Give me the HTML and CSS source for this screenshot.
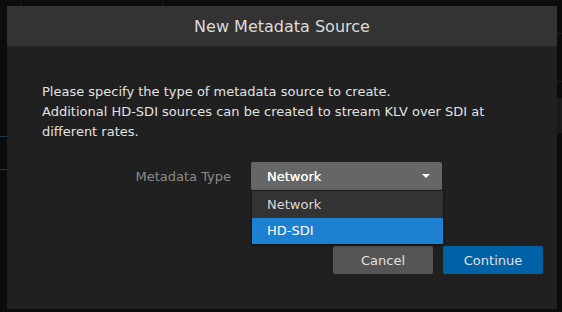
FILE: index.html
```html
<!DOCTYPE html>
<html lang="en">
<head>
  <meta charset="UTF-8" />
  <title>New Metadata Source</title>
  <link rel="stylesheet" href="styles.css">
</head>
<body>
  <div class="backdrop">
    <span class="line top-a"></span>
    <span class="line top-b"></span>
    <span class="line left-a"></span>
    <span class="line left-b"></span>
    <span class="line right-a"></span>
    <span class="line right-b"></span>
    <span class="line right-c"></span>
  </div>
  <div class="modal">
    <header class="modal-header">
      <h1>New Metadata Source</h1>
    </header>
    <div class="modal-body">
      <p class="intro">
        Please specify the type of metadata source to create.<br>
        Additional HD-SDI sources can be created to stream KLV over SDI at different rates.
      </p>
      <div class="form-row">
        <label class="field-label">Metadata Type</label>
        <div class="select-wrap">
          <div class="select">
            <span>Network</span>
            <span class="caret"></span>
          </div>
          <ul class="options">
            <li>Network</li>
            <li class="active">HD-SDI</li>
          </ul>
        </div>
      </div>
      <div class="actions">
        <button class="btn">Cancel</button>
        <button class="btn primary">Continue</button>
      </div>
    </div>
  </div>
</body>
</html>
```

FILE: styles.css
```css
body {
  margin: 0;
  height: 312px;
  overflow: hidden;
  background: #0c0c0c;
  font-family: "DejaVu Sans", Verdana, sans-serif;
  font-size: 13px;
  color: #e0e0e0;
  position: relative;
}
.backdrop .line {
  position: absolute;
  background: #1c1c1c;
}
.top-a { left: 20px; top: 0; width: 1px; height: 6px; }
.top-b { left: 162px; top: 0; width: 1px; height: 6px; }
.left-a, .left-b { left: 0; width: 7px; height: 1px; background: #1d3a52 !important; }
.left-a { top: 136px; }
.left-b { top: 169px; }
.right-a { left: 557px; top: 33px; width: 5px; height: 1px; }
.right-b { left: 557px; top: 81px; width: 5px; height: 1px; }
.right-c { left: 557px; top: 98px; width: 5px; height: 35px; background: #1a1a1a !important; }

.modal {
  position: relative;
  margin: 6px 0 0 7px;
  width: 550px;
  height: 303px;
  background: #202020;
}
.modal-header {
  height: 40px;
  background: #333333;
  display: flex;
  align-items: center;
  justify-content: center;
}
.modal-header h1 {
  margin: 0;
  font-size: 16px;
  font-weight: normal;
  color: #dcdcdc;
}
.modal-body {
  padding: 36px 14px 0 35px;
}
.intro {
  margin: 0;
  line-height: 20px;
  color: #e2e2e2;
}
.form-row {
  display: flex;
  align-items: center;
  gap: 20px;
  margin-top: 20px;
}
.field-label {
  width: 189px;
  text-align: right;
  color: #8a8a8a;
}
.select-wrap {
  position: relative;
  width: 191px;
}
.select {
  height: 28px;
  background: #666666;
  border-radius: 2px;
  display: flex;
  align-items: center;
  justify-content: space-between;
  padding: 0 12px 0 16px;
  color: #ffffff;
  text-shadow: 0 0 0.4px #ffffff;
}
.caret {
  width: 0;
  height: 0;
  border-left: 4px solid transparent;
  border-right: 4px solid transparent;
  border-top: 4px solid #ffffff;
}
.options {
  position: absolute;
  left: 1px;
  top: 29px;
  width: 191px;
  margin: 0;
  padding: 0;
  list-style: none;
  background: #333333;
  box-shadow: 0 1px 3px rgba(0, 0, 0, 0.6);
  z-index: 2;
}
.options li {
  height: 26px;
  line-height: 26px;
  padding-left: 15px;
  color: #d8d8d8;
}
.options li:first-child {
  height: 27px;
  line-height: 27px;
}
.options li.active {
  background: #1e80d0;
  color: #ffffff;
}
.actions {
  display: flex;
  justify-content: flex-end;
  gap: 10px;
  margin-top: 56px;
}
.btn {
  width: 100px;
  height: 28px;
  border: 0;
  border-radius: 2px;
  background: #555555;
  color: #e0e0e0;
  font-family: inherit;
  font-size: 13px;
  cursor: pointer;
}
.btn.primary {
  background: #0062a6;
}
```
